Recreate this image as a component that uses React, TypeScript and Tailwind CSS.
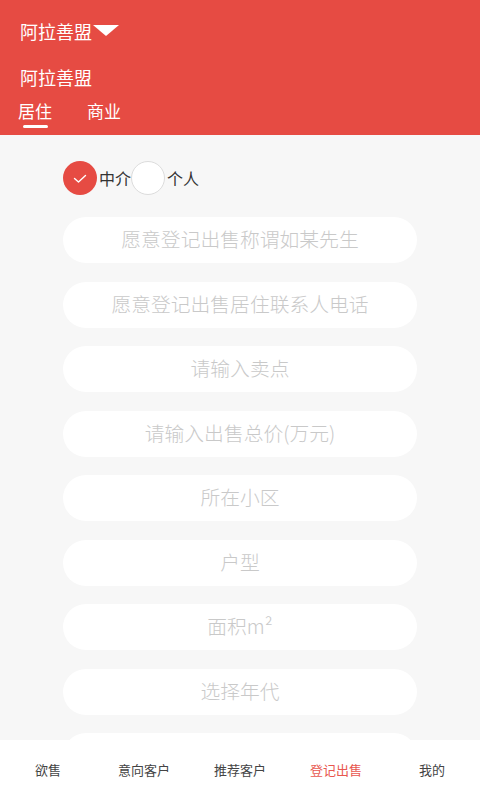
import { useState } from "react";

const fields = [
  "愿意登记出售称谓如某先生",
  "愿意登记出售居住联系人电话",
  "请输入卖点",
  "请输入出售总价(万元)",
  "所在小区",
  "户型",
  "面积m²",
  "选择年代",
  "",
];

const navItems = ["欲售", "意向客户", "推荐客户", "登记出售", "我的"];

export default function App() {
  const [tab, setTab] = useState("居住");
  const [kind, setKind] = useState("中介");

  return (
    <div
      className="flex h-[800px] w-[480px] flex-col overflow-hidden bg-[#f7f7f7]"
      style={{ fontFamily: '"Noto Sans CJK SC", "Noto Sans", sans-serif' }}
    >
      <header className="h-[135px] shrink-0 bg-[#e64b43] px-5 pt-[19px] text-white">
        <div className="flex h-[24px] items-center">
          <span className="text-[18px] leading-none">阿拉善盟</span>
          <svg width="26" height="12" viewBox="0 0 26 12" className="ml-[1px] -mt-[1px]">
            <polygon points="0,0 26,0 13,11" fill="#fff" />
          </svg>
        </div>
        <div className="mt-[22px] text-[18px] leading-[24px]">阿拉善盟</div>
        <div className="mt-[11px] flex gap-[37px]">
          {["居住", "商业"].map((t) => (
            <button
              key={t}
              onClick={() => setTab(t)}
              className="-ml-[2px] flex flex-col items-center text-[17px] leading-[22px] text-white"
            >
              <span>{t}</span>
              <span
                className={
                  tab === t
                    ? "mt-[3px] h-[3px] w-[25px] rounded-full bg-white"
                    : "mt-[3px] h-[3px] w-[25px]"
                }
              />
            </button>
          ))}
        </div>
      </header>

      <main className="flex-1 overflow-hidden pt-[26px]">
        <div className="flex h-[34px] items-center pl-[63px] text-[16px] text-[#333]">
          {["中介", "个人"].map((k) => (
            <button
              key={k}
              onClick={() => setKind(k)}
              className="flex items-center"
            >
              {kind === k ? (
                <span className="flex h-[34px] w-[34px] items-center justify-center rounded-full bg-[#e64b43]">
                  <svg width="16" height="10" viewBox="0 0 16 10" className="mt-[1px]">
                    <polyline
                      points="2.5,4.5 6.5,8 13.5,1.5"
                      fill="none"
                      stroke="#fff"
                      strokeWidth="1.4"
                      strokeLinecap="round"
                      strokeLinejoin="round"
                    />
                  </svg>
                </span>
              ) : (
                <span className="h-[34px] w-[34px] rounded-full border border-[#dcdcdc] bg-white" />
              )}
              <span className="ml-[2px] leading-none">{k}</span>
            </button>
          ))}
        </div>

        <div className="mt-[22px] flex flex-col gap-[18.5px] px-[63px]">
          {fields.map((f, i) => (
            <input
              key={i}
              placeholder={f}
              className="h-[46px] w-full shrink-0 rounded-full bg-white pb-[3px] text-center text-[19.8px] font-light text-[#333] outline-none placeholder:text-[#c9c9c9]"
            />
          ))}
        </div>
      </main>

      <nav className="grid h-[60px] shrink-0 grid-cols-5 bg-white">
        {navItems.map((n) => (
          <div
            key={n}
            className={
              n === "登记出售"
                ? "flex items-center justify-center text-[13px] text-[#e8574f]"
                : "flex items-center justify-center text-[13px] text-[#444]"
            }
          >
            {n}
          </div>
        ))}
      </nav>
    </div>
  );
}
